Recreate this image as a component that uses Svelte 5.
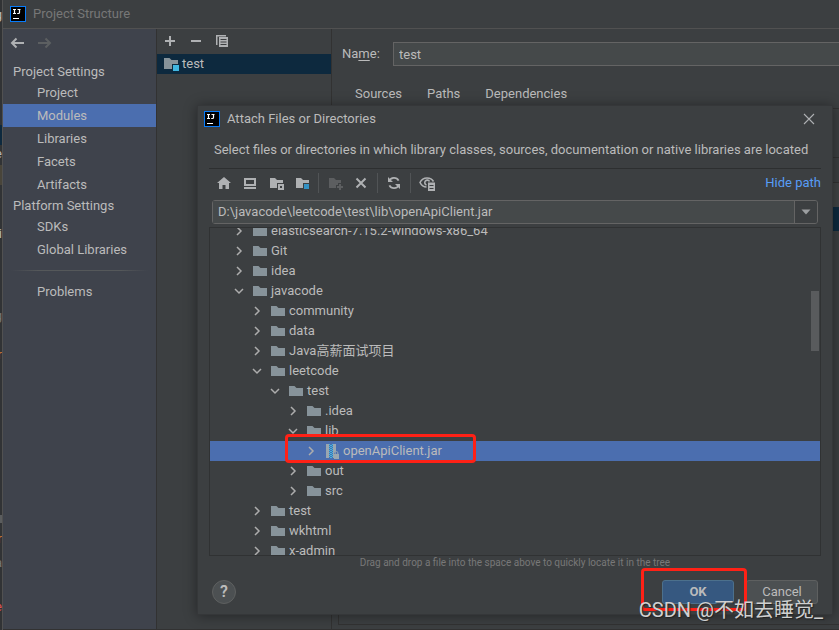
<script>
	let moduleName = $state('test');
	let path = $state('D:\\javacode\\leetcode\\test\\lib\\openApiClient.jar');
	let section = $state('Modules');
	let selected = $state('openApiClient.jar');

	const projectItems = ['Project', 'Modules', 'Libraries', 'Facets', 'Artifacts'];
	const platformItems = ['SDKs', 'Global Libraries'];
	const tabs = ['Sources', 'Paths', 'Dependencies'];

	const tree = [
		{ name: 'elasticsearch-7.15.2-windows-x86_64', depth: 0 },
		{ name: 'Git', depth: 0 },
		{ name: 'idea', depth: 0 },
		{ name: 'javacode', depth: 0, open: true },
		{ name: 'community', depth: 1 },
		{ name: 'data', depth: 1 },
		{ name: 'Java高薪面试项目', depth: 1 },
		{ name: 'leetcode', depth: 1, open: true },
		{ name: 'test', depth: 2, open: true },
		{ name: '.idea', depth: 3 },
		{ name: 'lib', depth: 3, open: true },
		{ name: 'openApiClient.jar', depth: 4, jar: true },
		{ name: 'out', depth: 3 },
		{ name: 'src', depth: 3 },
		{ name: 'test', depth: 1 },
		{ name: 'wkhtml', depth: 1 },
		{ name: 'x-admin', depth: 1 }
	];
</script>

{#snippet logo()}
	<svg class="logo" width="16" height="16" viewBox="0 0 16 16" aria-hidden="true">
		<rect x="0.5" y="0.5" width="15" height="15" fill="#000" stroke="#087cfa" />
		<path d="M3 3.5h3M4.5 3.5v4M3 7.5h3M7.5 3.5h3M9.5 3v3.5q0 1-1 1H7.2" fill="none" stroke="#fff" stroke-width="1.2" />
		<path d="M3 12.5h6" stroke="#fff" />
	</svg>
{/snippet}

{#snippet folder()}
	<svg width="16" height="16" viewBox="0 0 16 16" aria-hidden="true">
		<path d="M1 3h5.5l2 2H15v8H1z" fill="#87939a" />
	</svg>
{/snippet}

{#snippet navItem(name)}
	<button class="nav-item" class:active={section === name} onclick={() => (section = name)}>{name}</button>
{/snippet}

<div class="desktop">
	<div class="editor" aria-hidden="true">
		<span class="e1">g</span>
		<i class="blue"></i>
		<span class="e2">e</span>
		<i class="olive"></i>
		<span class="e3">i</span>
		<span class="e4">g</span>
		<span class="e5">r</span>
		<i class="grey"></i>
		<span class="e6">r</span>
		<span class="e7">a</span>
		<span class="e8">e</span>
	</div>

	<div class="window">
		<header class="titlebar">
			{@render logo()}
			<span>Project Structure</span>
		</header>

		<div class="body">
			<nav class="sidebar">
				<div class="history">
					<button aria-label="Back">
						<svg width="16" height="16" viewBox="0 0 16 16"><path d="M14 8H3M6.500 3.500L2 8l4.500 4.500" fill="none" stroke="#afb1b3" stroke-width="2" /></svg>
					</button>
					<button aria-label="Forward" disabled>
						<svg width="16" height="16" viewBox="0 0 16 16"><path d="M1 8h11M8.500 3.500L13 8l-4.500 4.500" fill="none" stroke="#5c5f61" stroke-width="2" /></svg>
					</button>
				</div>
				<h2>Project Settings</h2>
				{#each projectItems as item}
					{@render navItem(item)}
				{/each}
				<h2>Platform Settings</h2>
				{#each platformItems as item}
					{@render navItem(item)}
				{/each}
				<hr />
				{@render navItem('Problems')}
			</nav>

			<section class="modules">
				<div class="module-tools">
					<button aria-label="Add">
						<svg width="16" height="16" viewBox="0 0 16 16"><path d="M8 3v10M3 8h10" stroke="#afb1b3" stroke-width="2" /></svg>
					</button>
					<button aria-label="Remove">
						<svg width="16" height="16" viewBox="0 0 16 16"><path d="M3 8h10" stroke="#afb1b3" stroke-width="2" /></svg>
					</button>
					<button aria-label="Copy">
						<svg width="16" height="16" viewBox="0 0 16 16">
							<path d="M2 2h10v1.500H3.500V12H2z" fill="#afb1b3" />
							<path d="M5 4h9v10H5z" fill="#afb1b3" />
							<path d="M6.500 6.500h6M6.500 9h6M6.500 11.500h6" stroke="#3c3f41" />
						</svg>
					</button>
				</div>
				<button class="module">
					<svg width="16" height="16" viewBox="0 0 16 16" aria-hidden="true">
						<path d="M1 2h5.500l2 2H15v4H9v5H1z" fill="#87939a" />
						<path d="M10 9h6v6h-6z" fill="#40b6e0" />
					</svg>
					test
				</button>
			</section>

			<main>
				<div class="name-row">
					<label for="name">Na<u>m</u>e:</label>
					<input id="name" bind:value={moduleName} />
				</div>
				<div class="tabs">
					{#each tabs as tab}
						<button>{tab}</button>
					{/each}
				</div>
				<div class="dependencies">
					<div class="sdk"></div>
					<div class="dep-tools"></div>
					<div class="dep-head"></div>
					<div class="dep-selected"></div>
				</div>
			</main>
		</div>
	</div>

	<div class="dialog" role="dialog" aria-labelledby="dialog-title">
		<header class="dialog-title">
			{@render logo()}
			<span id="dialog-title">Attach Files or Directories</span>
			<button aria-label="Close">
				<svg width="16" height="16" viewBox="0 0 16 16"><path d="M3 3l10 10M13 3L3 13" stroke="#afb1b3" stroke-width="1.100" /></svg>
			</button>
		</header>
		<p class="description">
			Select files or directories in which library classes, sources, documentation or native libraries are located
		</p>

		<div class="toolbar">
			<button aria-label="Home">
				<svg width="16" height="16" viewBox="0 0 16 16"><path d="M8 2l7 6h-2v6H9.500v-4h-3v4H3V8H1z" fill="#afb1b3" /></svg>
			</button>
			<button aria-label="Desktop">
				<svg width="16" height="16" viewBox="0 0 16 16">
					<path d="M3 4h10v6H3z" fill="none" stroke="#afb1b3" stroke-width="2" />
					<path d="M2 13h12" stroke="#afb1b3" stroke-width="2" />
				</svg>
			</button>
			<button aria-label="Project directory">
				<svg width="16" height="16" viewBox="0 0 16 16">
					<path d="M2 3h5l2 2h6v3H9v5H2z" fill="#afb1b3" />
					<path d="M11 10h4v4h-4z" fill="none" stroke="#afb1b3" stroke-width="2" />
				</svg>
			</button>
			<button aria-label="Module directory">
				<svg width="16" height="16" viewBox="0 0 16 16">
					<path d="M2 3h5l2 2h6v3H9v5H2z" fill="#afb1b3" />
					<path d="M10 9h5v5h-5z" fill="#3592c4" />
				</svg>
			</button>
			<span class="divider"></span>
			<button aria-label="New folder" disabled>
				<svg width="16" height="16" viewBox="0 0 16 16">
					<path d="M2 3h5l2 2h5v3h-3v2H9v3H2z" fill="#5c5e60" />
					<path d="M13 9v6M10 12h6" stroke="#5c5e60" stroke-width="2" />
				</svg>
			</button>
			<button aria-label="Delete">
				<svg width="16" height="16" viewBox="0 0 16 16"><path d="M3.500 3.500l9 9M12.500 3.500l-9 9" stroke="#afb1b3" stroke-width="2" /></svg>
			</button>
			<span class="divider"></span>
			<button aria-label="Refresh">
				<svg width="16" height="16" viewBox="0 0 16 16">
					<path d="M3.200 6A5.200 5.200 0 0 1 12.600 5.600M12.800 10A5.200 5.200 0 0 1 3.400 10.400" fill="none" stroke="#afb1b3" stroke-width="1.800" />
					<path d="M2 2v5h5zM14 14V9H9z" fill="#afb1b3" />
				</svg>
			</button>
			<span class="divider"></span>
			<button aria-label="Show hidden files">
				<svg width="16" height="16" viewBox="0 0 16 16">
					<path d="M7.500 12C4.500 12 2.500 10.500 1 7.500 2.500 4.500 5 3 8 3s5.300 1.300 6.500 3.500" fill="none" stroke="#afb1b3" stroke-width="1.600" />
					<path d="M7.500 10A2.500 2.500 0 1 1 10.500 6.500" fill="none" stroke="#afb1b3" stroke-width="1.600" />
					<path d="M9 7.500h7V16H9z" fill="#afb1b3" />
					<path d="M10.500 10.500h4M10.500 13.500h4" stroke="#3c3f41" />
				</svg>
			</button>
			<a href="#path">Hide path</a>
		</div>

		<div class="combo">
			<input id="path" aria-label="Path" bind:value={path} />
			<button aria-label="Recent paths">
				<svg width="10" height="6" viewBox="0 0 10 6"><path d="M0.500 0.500h9L5 5.500z" fill="#9b9ea0" /></svg>
			</button>
		</div>

		<div class="tree">
			<ul>
				{#each tree as node}
					<li class:selected={selected === node.name} style="--depth: {node.depth}">
						<button onclick={() => (selected = node.name)}>
							<svg class="arrow" width="16" height="16" viewBox="0 0 16 16" aria-hidden="true">
								<path d={node.open ? 'M4 6l4 4 4-4' : 'M6 4l4 4-4 4'} fill="none" stroke="#adadad" stroke-width="1.500" />
							</svg>
							{#if node.jar}
								<svg width="16" height="16" viewBox="0 0 16 16" aria-hidden="true">
									<path d="M2 1h3v14H2zM9 1h3v7.500l-2 1.500v5H9z" fill="#9aa7b0" />
									<path d="M5.500 1v14M8.500 1v14" stroke="#40b6e0" stroke-dasharray="1 1" />
									<path d="M7 2v13" stroke="#40b6e0" stroke-dasharray="1 1" stroke-width="2" />
									<path d="M11 11h4v5h-5v-5z" fill="#9aa7b0" />
									<path d="M11.200 11V9.800a1.300 1.300 0 0 1 2.600 0V11" fill="none" stroke="#9aa7b0" />
								</svg>
							{:else}
								{@render folder()}
							{/if}
							<span>{node.name}</span>
						</button>
						{#if node.jar}
							<span class="mark"></span>
						{/if}
					</li>
				{/each}
			</ul>
			<span class="thumb"></span>
		</div>
		<p class="hint">Drag and drop a file into the space above to quickly locate it in the tree</p>

		<footer>
			<button class="help" aria-label="Help">?</button>
			<div class="ok-wrap">
				<button class="ok">OK</button>
				<span class="mark"></span>
			</div>
			<button class="cancel">Cancel</button>
		</footer>
	</div>

	<span class="watermark">CSDN @不如去睡觉_</span>
</div>

<style>
	:global(body) {
		margin: 0;
		background: #2b2b2b;
	}

	.desktop {
		position: relative;
		display: flex;
		height: 100vh;
		min-height: 620px;
		overflow: hidden;
		color: #bbbbbb;
		font-family: Roboto, 'Noto Sans CJK SC', sans-serif;
		font-size: 13px;
		line-height: 20px;
	}

	.desktop * {
		box-sizing: border-box;
	}

	button {
		display: flex;
		align-items: center;
		padding: 0;
		border: 0;
		background: none;
		color: inherit;
		font: inherit;
		white-space: nowrap;
	}

	input {
		min-width: 0;
		padding: 0 5px;
		border: 1px solid #646464;
		outline: 0;
		background: #45494a;
		color: inherit;
		font: inherit;
	}

	svg {
		display: block;
		flex: none;
	}

	h2,
	p,
	ul {
		margin: 0;
		padding: 0;
		font-size: 13px;
		font-weight: 400;
	}

	/* sliver of the editor left of the window */
	.editor {
		position: relative;
		flex: none;
		width: 3px;
		overflow: hidden;
		border-right: 1px solid #515151;
		background: #313335;
	}

	.editor span,
	.editor i {
		position: absolute;
		right: 0;
	}

	.editor i {
		left: 0;
		height: 20px;
	}

	.editor .blue {
		top: 125px;
		background: #0d293e;
	}

	.editor .olive {
		top: 165px;
		background: #49453a;
	}

	.editor .grey {
		top: 515px;
		height: 8px;
		background: #5b5d5e;
	}

	.e1 {
		top: 5px;
	}

	.e2 {
		top: 144px;
	}

	.e3 {
		top: 224px;
	}

	.e4 {
		top: 306px;
		color: #777777;
	}

	.e5 {
		top: 345px;
		color: #cc7832;
	}

	.e6 {
		top: 529px;
		color: #cc7832;
	}

	.e7 {
		top: 553px;
		color: #777777;
	}

	.e8 {
		top: 597px;
		color: #e05555;
	}

	.window {
		display: flex;
		flex: 1;
		flex-direction: column;
		min-width: 0;
		border-bottom: 1px solid #323232;
		background: #3c3f41;
	}

	.titlebar {
		display: flex;
		align-items: center;
		gap: 7px;
		height: 29px;
		padding-left: 7px;
		border-bottom: 1px solid #515151;
		color: #777777;
	}

	.body {
		display: flex;
		flex: 1;
		min-height: 0;
	}

	.sidebar {
		flex: none;
		width: 154px;
		border-right: 1px solid #323232;
		background: #3f434c;
	}

	.history {
		display: flex;
		gap: 11px;
		height: 33px;
		padding: 6px 7px;
		align-items: flex-start;
	}

	.sidebar h2 {
		padding-left: 10px;
		line-height: 19px;
	}

	.nav-item {
		width: 100%;
		height: 23px;
		padding-left: 34px;
	}

	.nav-item.active {
		background: #4b6eaf;
	}

	hr {
		height: 1px;
		margin: 9px 8px;
		border: 0;
		background: linear-gradient(90deg, transparent, #55585a 20%, #55585a 80%, transparent);
	}

	.modules {
		flex: none;
		width: 175px;
		border-right: 1px solid #323232;
	}

	.module-tools {
		display: flex;
		align-items: center;
		gap: 10px;
		height: 25px;
		padding: 0 0 2px 5px;
	}

	.module {
		gap: 3px;
		width: 100%;
		height: 20px;
		padding-left: 6px;
		background: #0d293e;
	}

	main {
		display: flex;
		flex: 1;
		flex-direction: column;
		min-width: 0;
		padding: 13px 0 4px 6px;
	}

	.name-row {
		display: flex;
		align-items: center;
		padding-left: 4px;
	}

	.name-row label {
		width: 51px;
	}

	.name-row u {
		text-underline-offset: 2px;
	}

	.name-row input {
		flex: 1;
		height: 24px;
		border-right: 0;
	}

	.tabs {
		display: flex;
		gap: 25px;
		height: 42px;
		padding: 18px 0 0 17px;
	}

	.tabs button {
		height: 20px;
	}

	.dependencies {
		flex: 1;
		border: 1px solid #323232;
		border-right: 0;
	}

	.sdk {
		height: 49px;
		border-bottom: 1px solid #323232;
	}

	.dep-tools {
		height: 25px;
		border-bottom: 1px solid #323232;
	}

	.dep-head {
		height: 24px;
		background: #414445;
	}

	.dep-selected {
		height: 24px;
		background: #0d293e;
	}

	.dialog {
		position: absolute;
		top: 105px;
		right: 6px;
		left: 197px;
		padding: 0 11px 10px;
		border: 1px solid #353739;
		background: #3c3f41;
		box-shadow: 0 1px 12px rgba(0, 0, 0, 0.4);
	}

	.dialog-title {
		display: flex;
		align-items: center;
		gap: 7px;
		height: 27px;
		margin-left: -5px;
		padding-bottom: 2px;
	}

	.dialog-title button {
		margin-left: auto;
		margin-right: 4px;
	}

	.description {
		height: 36px;
		padding: 7px 5px;
		border-bottom: 1px solid #2d2f30;
		white-space: nowrap;
	}

	.toolbar {
		display: flex;
		align-items: center;
		gap: 10px;
		height: 30px;
		padding: 0 0 2px 7px;
	}

	.divider {
		width: 1px;
		height: 20px;
		margin: 0 -2px;
		background: #515456;
	}

	a {
		margin-left: auto;
		color: #589df6;
		text-decoration: none;
	}

	.combo {
		display: flex;
		height: 24px;
		margin: 1px 3px 3px;
		border: 1px solid #646464;
		border-radius: 3px;
		background: #45494a;
	}

	.combo input {
		flex: 1;
		border: 0;
		border-right: 1px solid #646464;
	}

	.combo button {
		justify-content: center;
		width: 22px;
		border-radius: 0 2px 2px 0;
		background: #3c3f41;
	}

	.tree {
		position: relative;
		height: 329px;
		overflow: hidden;
		border: 1px solid #303233;
	}

	ul {
		margin-top: -7px;
		list-style: none;
	}

	li {
		position: relative;
		padding-left: calc(21px + var(--depth) * 18px);
	}

	li button {
		width: 100%;
		height: 20px;
	}

	li .arrow {
		margin-right: 5px;
	}

	li span {
		padding-left: 3px;
	}

	.selected {
		background: #4b6eaf;
	}

	.thumb {
		position: absolute;
		top: 63px;
		right: 1px;
		width: 8px;
		height: 60px;
		background: #595b5d;
	}

	.mark {
		position: absolute;
		z-index: 1;
		border: 3px solid #ff2116;
		border-radius: 4px;
		pointer-events: none;
	}

	li .mark {
		top: -7px;
		left: 75px;
		width: 191px;
		height: 29px;
	}

	.hint {
		color: #787878;
		font-size: 10px;
		line-height: 14px;
		text-align: center;
	}

	footer {
		display: flex;
		align-items: center;
		gap: 12px;
		height: 24px;
		margin: 10px 3px 0;
	}

	.help {
		justify-content: center;
		width: 24px;
		height: 24px;
		margin-right: auto;
		border: 1px solid #5e6060;
		border-radius: 50%;
		background: #4c5052;
		font-size: 16px;
		font-weight: 600;
	}

	.ok-wrap {
		position: relative;
	}

	.ok,
	.cancel {
		justify-content: center;
		width: 72px;
		height: 24px;
		border: 1px solid #5e6060;
		border-radius: 3px;
		background: #4c5052;
	}

	.ok {
		border-color: #4c708c;
		background: #365880;
		font-weight: 700;
	}

	.ok-wrap .mark {
		top: -12px;
		left: -21px;
		width: 106px;
		height: 43px;
	}

	.watermark {
		position: absolute;
		right: 16px;
		bottom: 6px;
		z-index: 2;
		color: #d0d0d0;
		font-size: 20px;
		line-height: 28px;
		text-shadow: 1px 1px 1px #222222;
		white-space: nowrap;
	}
</style>
